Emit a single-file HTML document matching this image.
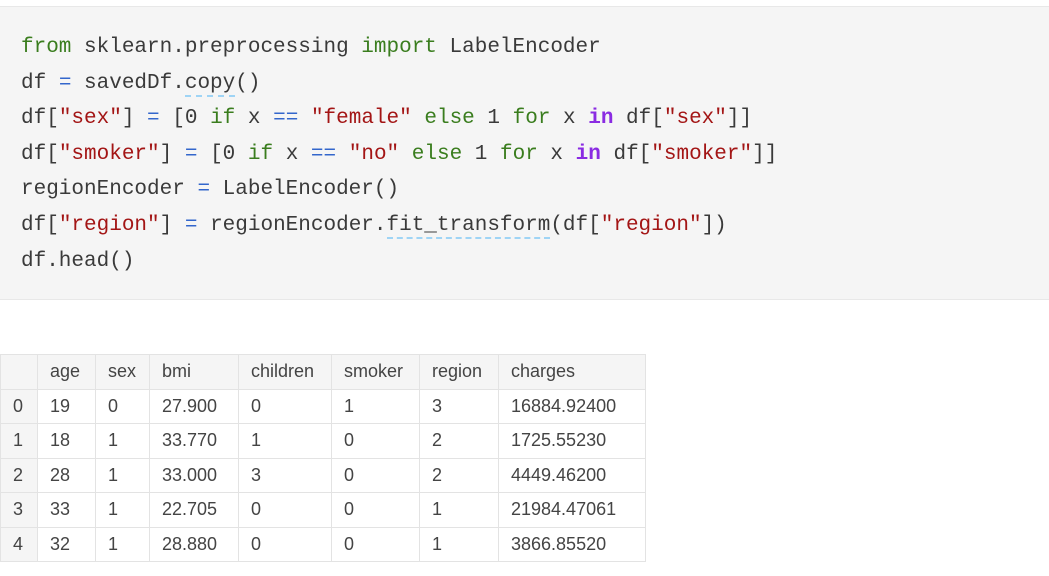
<!DOCTYPE html>
<html><head><style>
body{margin:0;background:#fff;width:1049px;height:576px;overflow:hidden;font-family:"Liberation Sans",sans-serif;}
.code{position:absolute;left:0;top:6px;width:1049px;height:292px;background:#f5f5f5;border-top:1px solid #e8e8e8;border-bottom:1px solid #e8e8e8;}
pre{margin:0;position:absolute;left:21px;top:23px;font-family:"Liberation Mono",monospace;font-size:21px;line-height:35.6px;color:#3a3a3a;}
.k{color:#3a7d1e}.s{color:#a31515}.o{color:#3366cc}.p{color:#8a2be2;font-weight:bold}.u{border-bottom:2px dashed #9fd4f5}
table{position:absolute;left:0;top:354px;border-collapse:collapse;font-size:18px;color:#444;table-layout:fixed;width:645px;}
td,th{border:1px solid #e3e3e3;height:33.5px;padding:0 0 0 12px;text-align:left;font-weight:normal;overflow:hidden;white-space:nowrap;}
th{background:#f5f5f5;}
td.i{background:#f5f5f5;}
</style></head><body>
<div class="code"><pre><span class="k">from</span> sklearn.preprocessing <span class="k">import</span> LabelEncoder
df <span class="o">=</span> savedDf.<span class="u">copy</span>()
df[<span class="s">"sex"</span>] <span class="o">=</span> [0 <span class="k">if</span> x <span class="o">==</span> <span class="s">"female"</span> <span class="k">else</span> 1 <span class="k">for</span> x <span class="p">in</span> df[<span class="s">"sex"</span>]]
df[<span class="s">"smoker"</span>] <span class="o">=</span> [0 <span class="k">if</span> x <span class="o">==</span> <span class="s">"no"</span> <span class="k">else</span> 1 <span class="k">for</span> x <span class="p">in</span> df[<span class="s">"smoker"</span>]]
regionEncoder <span class="o">=</span> LabelEncoder()
df[<span class="s">"region"</span>] <span class="o">=</span> regionEncoder.<span class="u">fit_transform</span>(df[<span class="s">"region"</span>])
df.head()</pre></div>
<table>
<colgroup><col style="width:37px"><col style="width:58px"><col style="width:54px"><col style="width:89px"><col style="width:93px"><col style="width:88px"><col style="width:79px"><col style="width:147px"></colgroup>
<tr><th></th><th>age</th><th>sex</th><th>bmi</th><th>children</th><th>smoker</th><th>region</th><th>charges</th></tr>
<tr><td class="i">0</td><td>19</td><td>0</td><td>27.900</td><td>0</td><td>1</td><td>3</td><td>16884.92400</td></tr>
<tr><td class="i">1</td><td>18</td><td>1</td><td>33.770</td><td>1</td><td>0</td><td>2</td><td>1725.55230</td></tr>
<tr><td class="i">2</td><td>28</td><td>1</td><td>33.000</td><td>3</td><td>0</td><td>2</td><td>4449.46200</td></tr>
<tr><td class="i">3</td><td>33</td><td>1</td><td>22.705</td><td>0</td><td>0</td><td>1</td><td>21984.47061</td></tr>
<tr><td class="i">4</td><td>32</td><td>1</td><td>28.880</td><td>0</td><td>0</td><td>1</td><td>3866.85520</td></tr>
</table>
</body></html>
